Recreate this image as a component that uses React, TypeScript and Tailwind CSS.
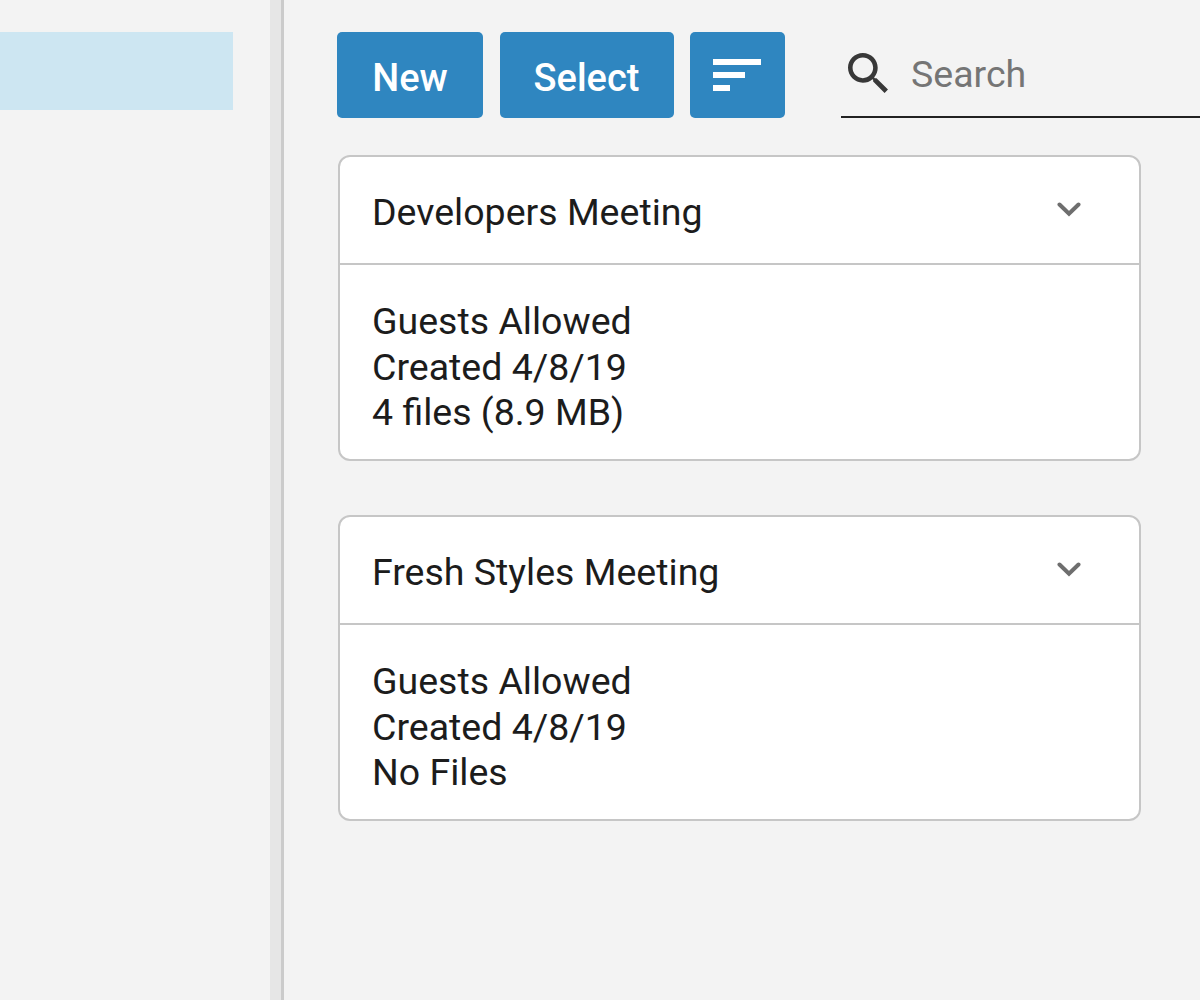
import React from "react";

const meetings = [
  { title: "Developers Meeting", lines: ["Guests Allowed", "Created 4/8/19", "4 files (8.9 MB)"] },
  { title: "Fresh Styles Meeting", lines: ["Guests Allowed", "Created 4/8/19", "No Files"] },
];

function Card({ title, lines }: { title: string; lines: string[] }) {
  return (
    <section className="h-[306px] w-[803px] rounded-[12px] border-2 border-[#c6c6c6] bg-white">
      <header className="flex h-[108px] items-center justify-between border-b-2 border-[#c6c6c6] pl-8 pr-[58px]">
        <h2 className="pt-[4px] text-[37.5px] leading-[46px]">{title}</h2>
        <svg className="mb-[3px] h-[16px] w-[24px]" viewBox="0 0 24 16" fill="none" stroke="#6e6e6e" strokeWidth="4" strokeLinecap="round">
          <path d="M2.5 3.5 12 12.8 21.5 3.5" />
        </svg>
      </header>
      <div className="pl-8 pt-[34px] text-[37.5px] leading-[45.7px]">
        {lines.map((line) => (
          <p key={line}>{line}</p>
        ))}
      </div>
    </section>
  );
}

export default function App() {
  return (
    <div className="flex h-[1000px] w-[1200px] overflow-hidden bg-[#f3f3f3] font-[Roboto,sans-serif] text-[#1c1c1c]">
      <aside className="w-[270px] shrink-0 pt-8">
        <div className="h-[78px] w-[233px] bg-[#cde6f2]" />
      </aside>
      <div className="w-[14px] shrink-0 border-r-[3px] border-[#cbcbcb] bg-[#e6e6e6]" />
      <main className="w-[916px] shrink-0 pl-[53px] pt-8">
        <div className="flex h-[86px] text-[38px] font-medium text-white">
          <button className="w-[146px] rounded-[5px] bg-[#2f86c0] pt-[7px]">New</button>
          <button className="ml-[16.5px] w-[174px] rounded-[5px] bg-[#2f86c0] pt-[7px]">Select</button>
          <button className="ml-[16.5px] flex w-[95px] rounded-[5px] bg-[#2f86c0] pl-[23px] pt-[27px]">
            <svg className="h-[33px] w-[48px]" viewBox="0 0 48 33" fill="white">
              <path d="M0 0h48v6H0zM0 13h32v6H0zM0 26h17v6H0z" />
            </svg>
          </button>
          <label className="ml-14 flex flex-1 border-b-2 border-[#212121] font-normal text-[#757575]">
            <svg className="ml-[6.5px] mt-[21px] h-[40px] w-[40px] text-[#383838]" viewBox="3 3 17.5 17.5" fill="currentColor">
              <path d="M15.5 14h-.79l-.28-.27C15.41 12.59 16 11.11 16 9.5 16 5.91 13.09 3 9.5 3S3 5.91 3 9.5 5.91 16 9.5 16c1.61 0 3.09-.59 4.23-1.57l.27.28v.79l5 4.99L20.49 19l-4.99-5zm-6 0C7.01 14 5 11.99 5 9.5S7.01 5 9.5 5 14 7.01 14 9.5 11.99 14 9.5 14z" />
            </svg>
            <span className="ml-[23.5px] mt-[19px] text-[37.5px] leading-[46px]">Search</span>
          </label>
        </div>
        <div className="mt-[37px] ml-px flex flex-col gap-[54px]">
          {meetings.map((meeting) => (
            <Card key={meeting.title} {...meeting} />
          ))}
        </div>
      </main>
    </div>
  );
}
